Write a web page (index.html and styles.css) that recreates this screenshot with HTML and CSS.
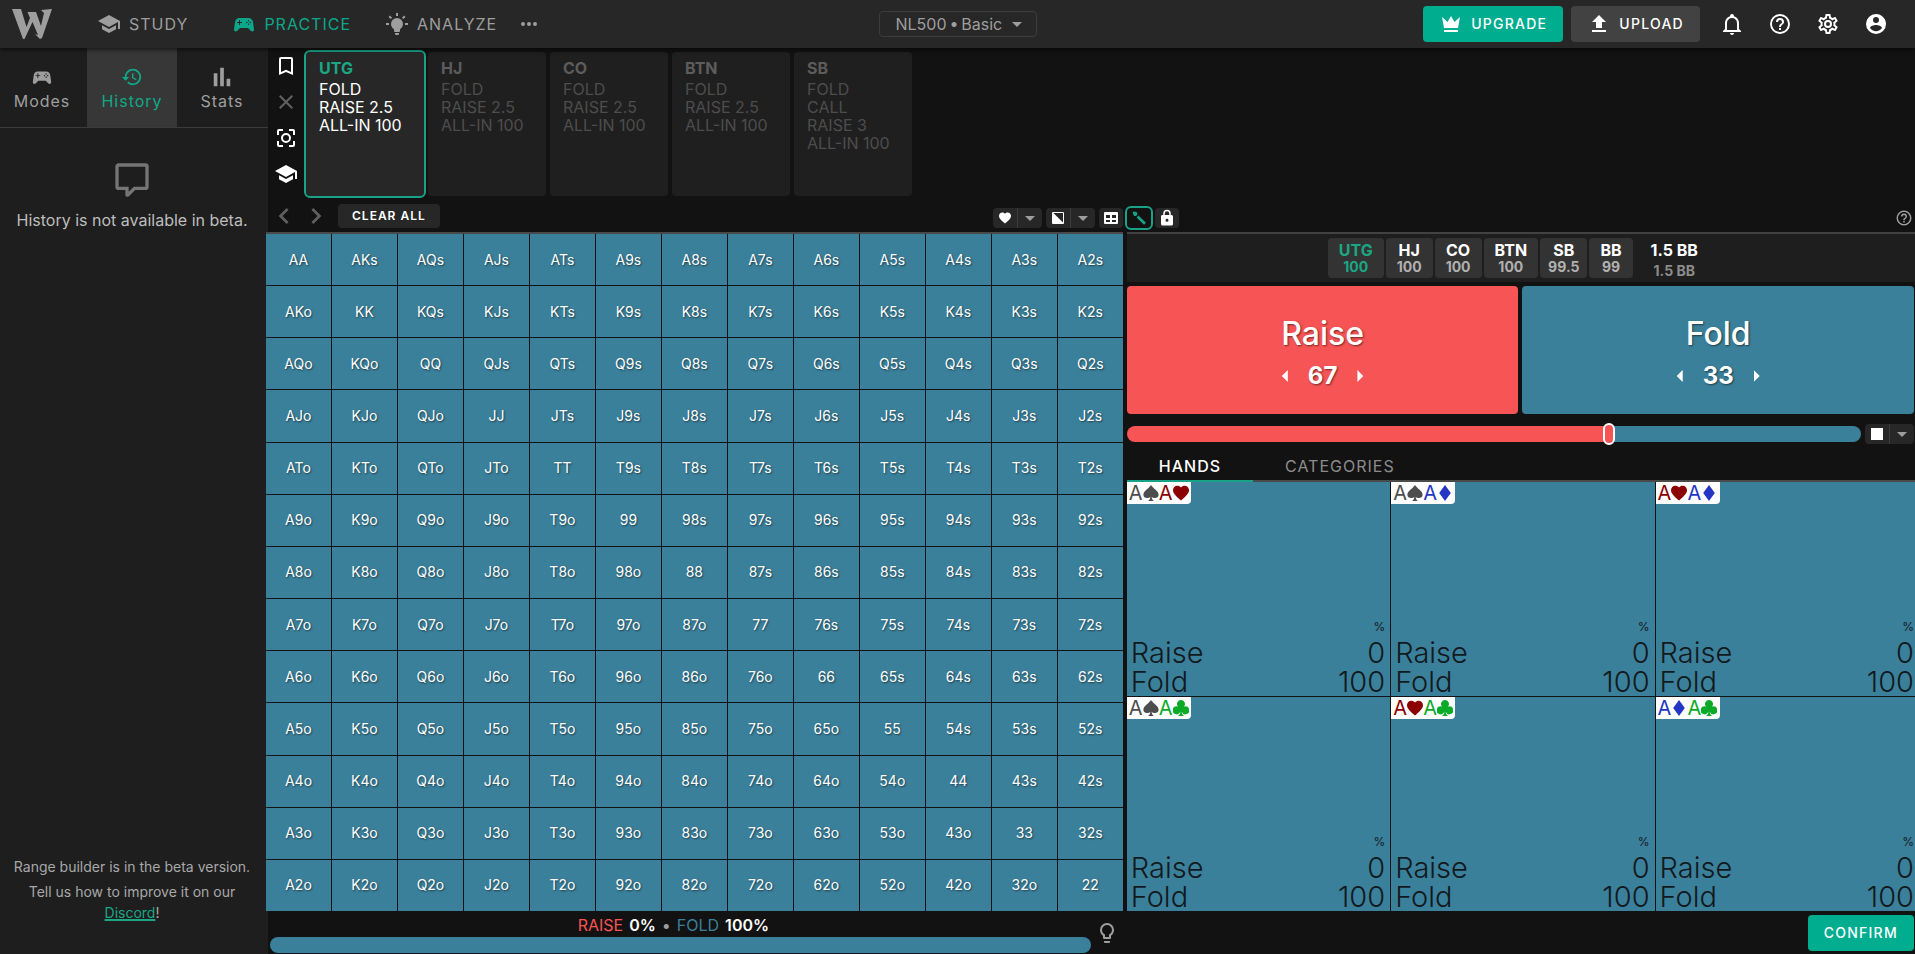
FILE: index.html
```html
<!DOCTYPE html>
<html lang="en">
<head>
<meta charset="utf-8">
<meta name="viewport" content="width=device-width, initial-scale=1">
<title>Range builder</title>
<link rel="stylesheet" href="styles.css">
</head>
<body>
<svg class="sprite" aria-hidden="true">
  <symbol id="i-school" viewBox="0 0 24 24"><path d="M12,3L1,9L12,15L21,10.09V17H23V9M5,13.18V17.18L12,21L19,17.18V13.18L12,17L5,13.18Z"/></symbol>
  <symbol id="i-pad" viewBox="0 0 24 24"><path fill-rule="evenodd" d="M7.97,16L5,19C4.67,19.3 4.23,19.5 3.75,19.5A1.75,1.75 0 0,1 2,17.75V17.5L3,10.12C3.21,7.81 5.14,6 7.5,6H16.5C18.86,6 20.79,7.81 21,10.12L22,17.5V17.75A1.75,1.75 0 0,1 20.25,19.5C19.77,19.5 19.33,19.3 19,19L16.03,16H7.97M7,8V10H5V11H7V13H8V11H10V10H8V8H7M16.5,8A.75,.75 0 0,0 16.5,9.5A.75,.75 0 0,0 16.5,8M14.75,9.75A.75,.75 0 0,0 14.75,11.25A.75,.75 0 0,0 14.75,9.75M18.25,9.75A.75,.75 0 0,0 18.25,11.25A.75,.75 0 0,0 18.25,9.75M16.5,11.5A.75,.75 0 0,0 16.5,13A.75,.75 0 0,0 16.5,11.5Z"/></symbol>
  <symbol id="i-bulb-on" viewBox="0 0 24 24"><path d="M12,6A6,6 0 0,1 18,12C18,14.22 16.79,16.16 15,17.2V19A1,1 0 0,1 14,20H10A1,1 0 0,1 9,19V17.2C7.21,16.16 6,14.22 6,12A6,6 0 0,1 12,6M14,21V22A1,1 0 0,1 13,23H11A1,1 0 0,1 10,22V21H14M20,11H23V13H20V11M1,11H4V13H1V11M13,1V4H11V1H13M4.92,3.5L7.05,5.64L5.63,7.05L3.5,4.93L4.92,3.5M16.95,5.63L19.07,3.5L20.5,4.93L18.37,7.05L16.95,5.63Z"/></symbol>
  <symbol id="i-dots" viewBox="0 0 24 24"><path d="M16,12A2,2 0 0,1 20,12A2,2 0 0,1 16,12M10,12A2,2 0 0,1 14,12A2,2 0 0,1 10,12M4,12A2,2 0 0,1 8,12A2,2 0 0,1 4,12Z"/></symbol>
  <symbol id="i-down" viewBox="0 0 24 24"><path d="M7,10L12,15L17,10H7Z"/></symbol>
  <symbol id="i-crown" viewBox="0 0 24 24"><path d="M5,16L3,5L8.5,10L12,4L15.5,10L21,5L19,16H5M5,18H19V20H5V18Z"/></symbol>
  <symbol id="i-upload" viewBox="0 0 24 24"><path d="M9,16V10H5L12,3L19,10H15V16H9M5,20V18H19V20H5Z"/></symbol>
  <symbol id="i-bell" viewBox="0 0 24 24"><path d="M10 21H14C14 22.1 13.1 23 12 23S10 22.1 10 21M21 19V20H3V19L5 17V11C5 7.9 7.03 5.17 10 4.29V4A2 2 0 0 1 14 4V4.29C16.97 5.17 19 7.9 19 11V17L21 19M17 11A5 5 0 0 0 7 11V18H17V11Z"/></symbol>
  <symbol id="i-help" viewBox="0 0 24 24"><path d="M11,18H13V16H11V18M12,2A10,10 0 0,0 2,12A10,10 0 0,0 12,22A10,10 0 0,0 22,12A10,10 0 0,0 12,2M12,20C7.59,20 4,16.41 4,12C4,7.59 7.59,4 12,4C16.41,4 20,7.59 20,12C20,16.41 16.41,20 12,20M12,6A4,4 0 0,0 8,10H10A2,2 0 0,1 12,8A2,2 0 0,1 14,10C14,12 11,11.75 11,15H13C13,12.75 16,12.5 16,10A4,4 0 0,0 12,6Z"/></symbol>
  <symbol id="i-cog" viewBox="0 0 24 24"><path d="M12,8A4,4 0 0,1 16,12A4,4 0 0,1 12,16A4,4 0 0,1 8,12A4,4 0 0,1 12,8M12,10A2,2 0 0,0 10,12A2,2 0 0,0 12,14A2,2 0 0,0 14,12A2,2 0 0,0 12,10M10,22C9.75,22 9.54,21.82 9.5,21.58L9.13,18.93C8.5,18.68 7.96,18.34 7.44,17.94L4.95,18.95C4.73,19.03 4.46,18.95 4.34,18.73L2.34,15.27C2.21,15.05 2.27,14.78 2.46,14.63L4.57,12.97L4.5,12L4.57,11L2.46,9.37C2.27,9.22 2.21,8.95 2.34,8.73L4.34,5.27C4.46,5.05 4.73,4.96 4.95,5.05L7.44,6.05C7.96,5.66 8.5,5.32 9.13,5.07L9.5,2.42C9.54,2.18 9.75,2 10,2H14C14.25,2 14.46,2.18 14.5,2.42L14.87,5.07C15.5,5.32 16.04,5.66 16.56,6.05L19.05,5.05C19.27,4.96 19.54,5.05 19.66,5.27L21.66,8.73C21.79,8.95 21.73,9.22 21.54,9.37L19.43,11L19.5,12L19.43,13L21.54,14.63C21.73,14.78 21.79,15.05 21.66,15.27L19.66,18.73C19.54,18.95 19.27,19.04 19.05,18.95L16.56,17.95C16.04,18.34 15.5,18.68 14.87,18.93L14.5,21.58C14.46,21.82 14.25,22 14,22H10M11.25,4L10.88,6.61C9.68,6.86 8.62,7.5 7.85,8.39L5.44,7.35L4.69,8.65L6.8,10.2C6.4,11.37 6.4,12.64 6.8,13.8L4.68,15.36L5.43,16.66L7.86,15.62C8.63,16.5 9.68,17.14 10.87,17.38L11.24,20H12.76L13.13,17.39C14.32,17.14 15.37,16.5 16.14,15.62L18.57,16.66L19.32,15.36L17.2,13.81C17.6,12.64 17.6,11.37 17.2,10.2L19.31,8.65L18.56,7.35L16.15,8.39C15.38,7.5 14.32,6.86 13.12,6.62L12.75,4H11.25Z"/></symbol>
  <symbol id="i-account" viewBox="0 0 24 24"><path d="M12,19.2C9.5,19.2 7.29,17.92 6,16C6.03,14 10,12.9 12,12.9C14,12.9 17.97,14 18,16C16.71,17.92 14.5,19.2 12,19.2M12,5A3,3 0 0,1 15,8A3,3 0 0,1 12,11A3,3 0 0,1 9,8A3,3 0 0,1 12,5M12,2A10,10 0 0,0 2,12A10,10 0 0,0 12,22A10,10 0 0,0 22,12C22,6.47 17.5,2 12,2Z"/></symbol>
  <symbol id="i-history" viewBox="0 0 24 24"><path d="M13.5,8H12V13L16.28,15.54L17,14.33L13.5,12.25V8M13,3A9,9 0 0,0 4,12H1L4.96,16.03L9,12H6A7,7 0 0,1 13,5A7,7 0 0,1 20,12A7,7 0 0,1 13,19C11.07,19 9.32,18.21 8.06,16.94L6.64,18.36C8.27,20 10.5,21 13,21A9,9 0 0,0 22,12A9,9 0 0,0 13,3"/></symbol>
  <symbol id="i-stats" viewBox="0 0 24 24"><path d="M3,8H7V22H3V8M10,2H14V22H10V2M17,14H21V22H17V14Z"/></symbol>
  <symbol id="i-comment" viewBox="0 0 24 24"><path d="M9,22A1,1 0 0,1 8,21V18H4A2,2 0 0,1 2,16V4C2,2.89 2.9,2 4,2H20A2,2 0 0,1 22,4V16A2,2 0 0,1 20,18H13.9L10.2,21.71C10,21.9 9.75,22 9.5,22H9M10,16V19.08L13.08,16H20V4H4V16H10Z"/></symbol>
  <symbol id="i-bookmark" viewBox="0 0 24 24"><path d="M17,18L12,15.82L7,18V5H17M17,3H7A2,2 0 0,0 5,5V21L12,18L19,21V5C19,3.89 18.1,3 17,3Z"/></symbol>
  <symbol id="i-close" viewBox="0 0 24 24"><path d="M19,6.41L17.59,5L12,10.59L6.41,5L5,6.41L10.59,12L5,17.59L6.41,19L12,13.41L17.59,19L19,17.59L13.41,12L19,6.41Z"/></symbol>
  <symbol id="i-focus" viewBox="0 0 24 24"><path fill-rule="evenodd" d="M5,15H3V19A2,2 0 0,0 5,21H9V19H5M5,5H9V3H5A2,2 0 0,0 3,5V9H5M19,3H15V5H19V9H21V5A2,2 0 0,0 19,3M19,19H15V21H19A2,2 0 0,0 21,19V15H19M12,7A5,5 0 0,0 12,17A5,5 0 0,0 12,7M12,9A3,3 0 0,1 12,15A3,3 0 0,1 12,9Z"/></symbol>
  <symbol id="i-left" viewBox="0 0 24 24"><path d="M15.41,16.58L10.83,12L15.41,7.41L14,6L8,12L14,18L15.41,16.58Z"/></symbol>
  <symbol id="i-right" viewBox="0 0 24 24"><path d="M8.59,16.58L13.17,12L8.59,7.41L10,6L16,12L10,18L8.59,16.58Z"/></symbol>
  <symbol id="i-heart" viewBox="2 2 20 20"><path d="M12,21.35L10.55,20.03C5.4,15.36 2,12.27 2,8.5C2,5.41 4.42,3 7.5,3C9.24,3 10.91,3.81 12,5.08C13.09,3.81 14.76,3 16.5,3C19.58,3 22,5.41 22,8.5C22,12.27 18.6,15.36 13.45,20.03L12,21.35Z"/></symbol>
  <symbol id="i-half" viewBox="0 0 12 12"><path fill-rule="evenodd" d="M1,0H11A1,1 0 0,1 12,1V11A1,1 0 0,1 11,12H1A1,1 0 0,1 0,11V1A1,1 0 0,1 1,0M1.4,1L11,10.6V1Z"/></symbol>
  <symbol id="i-table" viewBox="0 0 14 12"><path fill-rule="evenodd" d="M1,0H13A1,1 0 0,1 14,1V11A1,1 0 0,1 13,12H1A1,1 0 0,1 0,11V1A1,1 0 0,1 1,0M2,3V6H6V3M8,3V6H12V3M2,8V10H6V8M8,8V10H12V8Z"/></symbol>
  <symbol id="i-brush" viewBox="0 0 14 14"><path d="M0.5,0.5C2,1 4.5,0 5.3,2.2C5.6,4 4.2,5.4 2.6,5C0.8,4.5 1.4,2.2 0.5,0.5M4.6,6.4L6.4,4.6L14,11.8L12,13.8Z"/></symbol>
  <symbol id="i-lock" viewBox="0 0 24 24"><path d="M12,17A2,2 0 0,0 14,15C14,13.89 13.1,13 12,13A2,2 0 0,0 10,15A2,2 0 0,0 12,17M18,8A2,2 0 0,1 20,10V20A2,2 0 0,1 18,22H6A2,2 0 0,1 4,20V10C4,8.89 4.9,8 6,8H7V6A5,5 0 0,1 12,1A5,5 0 0,1 17,6V8H18M12,3A3,3 0 0,0 9,6V8H15V6A3,3 0 0,0 12,3Z"/></symbol>
  <symbol id="i-bulb" viewBox="0 0 24 24"><path d="M12,2A7,7 0 0,1 19,9C19,11.38 17.81,13.47 16,14.74V17A1,1 0 0,1 15,18H9A1,1 0 0,1 8,17V14.74C6.19,13.47 5,11.38 5,9A7,7 0 0,1 12,2M9,20H15V21A1,1 0 0,1 14,22H10A1,1 0 0,1 9,21V20M12,4A5,5 0 0,0 7,9C7,11.05 8.23,12.81 10,13.58V16H14V13.58C15.77,12.81 17,11.05 17,9A5,5 0 0,0 12,4Z"/></symbol>
  <symbol id="i-spade" viewBox="1 1 22 22"><path d="M12,1C9,6 1.5,9 1.5,14.5C1.5,17.5 4,19 6.5,19C8.5,19 10,18.3 11,17C11,19 10.5,21 8,23H16C13.5,21 13,19 13,17C14,18.3 15.5,19 17.5,19C20,19 22.5,17.5 22.5,14.5C22.5,9 15,6 12,1Z"/></symbol>
  <symbol id="i-club" viewBox="1 1 22 22"><path d="M12,1A5.5,5.5 0 0,1 16.2,10A5.5,5.5 0 1,1 13,17.2C13,19.5 13.8,21.5 16,23H8C10.2,21.5 11,19.5 11,17.2A5.5,5.5 0 1,1 7.8,10A5.5,5.5 0 0,1 12,1Z"/></symbol>
  <symbol id="i-diamond" viewBox="1 1 22 22"><path d="M20,12L12,23L4,12L12,1Z"/></symbol>
  <symbol id="i-logo" viewBox="0 0 40 30"><path d="M0,0H9L14.5,18L18,9L15.5,3H24L29,17L32,4L29,1L40,0L30,29L28,30L23,25L26,26L20.5,13L12.5,30H11Z"/></symbol>
</svg>

<header class="topbar">
  <a class="logo" href="#" aria-label="Home"><svg><use href="#i-logo"/></svg></a>
  <nav class="mainnav">
    <a href="#"><svg class="icon"><use href="#i-school"/></svg>STUDY</a>
    <a class="on" href="#"><svg class="icon"><use href="#i-pad"/></svg>PRACTICE</a>
    <a href="#"><svg class="icon"><use href="#i-bulb-on"/></svg>ANALYZE</a>
    <button class="plain" aria-label="More"><svg class="icon"><use href="#i-dots"/></svg></button>
  </nav>
  <div class="game">
    <select aria-label="Game"><option>NL500&#8201;•&#8201;Basic</option></select>
    <svg class="icon"><use href="#i-down"/></svg>
  </div>
  <div class="account">
    <button class="btn primary"><svg class="icon"><use href="#i-crown"/></svg>UPGRADE</button>
    <button class="btn"><svg class="icon"><use href="#i-upload"/></svg>UPLOAD</button>
    <button class="plain" aria-label="Notifications"><svg class="icon"><use href="#i-bell"/></svg></button>
    <button class="plain" aria-label="Help"><svg class="icon"><use href="#i-help"/></svg></button>
    <button class="plain" aria-label="Settings"><svg class="icon"><use href="#i-cog"/></svg></button>
    <button class="plain" aria-label="Account"><svg class="icon"><use href="#i-account"/></svg></button>
  </div>
</header>

<div class="page">
  <aside class="sidebar">
    <nav class="sidetabs">
      <button><svg><use href="#i-pad"/></svg>Modes</button>
      <button class="on"><svg><use href="#i-history"/></svg>History</button>
      <button><svg><use href="#i-stats"/></svg>Stats</button>
    </nav>
    <div class="empty"><svg><use href="#i-comment"/></svg><p>History is not available in beta.</p></div>
    <footer class="beta"><p>Range builder is in the beta version.</p><p>Tell us how to improve it on our <a href="#">Discord</a>!</p></footer>
  </aside>

  <main class="content">
    <section class="actions">
      <div class="tools">
        <button class="plain" aria-label="Bookmark"><svg class="icon"><use href="#i-bookmark"/></svg></button>
        <button class="plain dim" aria-label="Clear"><svg class="icon"><use href="#i-close"/></svg></button>
        <button class="plain" aria-label="Focus"><svg class="icon"><use href="#i-focus"/></svg></button>
        <button class="plain" aria-label="Study"><svg class="icon"><use href="#i-school"/></svg></button>
      </div>
      <div class="seat on"><h2>UTG</h2><button>FOLD</button><button>RAISE 2.5</button><button>ALL-IN 100</button></div>
      <div class="seat"><h2>HJ</h2><button>FOLD</button><button>RAISE 2.5</button><button>ALL-IN 100</button></div>
      <div class="seat"><h2>CO</h2><button>FOLD</button><button>RAISE 2.5</button><button>ALL-IN 100</button></div>
      <div class="seat"><h2>BTN</h2><button>FOLD</button><button>RAISE 2.5</button><button>ALL-IN 100</button></div>
      <div class="seat"><h2>SB</h2><button>FOLD</button><button>CALL</button><button>RAISE 3</button><button>ALL-IN 100</button></div>
    </section>

    <section class="split toolbar">
      <div class="bar left">
        <button class="plain dim" aria-label="Back"><svg class="arrow"><use href="#i-left"/></svg></button>
        <button class="plain dim" aria-label="Forward"><svg class="arrow"><use href="#i-right"/></svg></button>
        <button class="clear">CLEAR ALL</button>
        <div class="chips">
          <div class="pair"><button aria-label="Suits"><svg class="i12"><use href="#i-heart"/></svg></button><button aria-label="Suit options"><svg class="icon"><use href="#i-down"/></svg></button></div>
          <div class="pair"><button aria-label="Fill"><svg class="i12"><use href="#i-half"/></svg></button><button aria-label="Fill options"><svg class="icon"><use href="#i-down"/></svg></button></div>
          <button class="chip" aria-label="Table"><svg class="i14"><use href="#i-table"/></svg></button>
        </div>
      </div>
      <div class="bar right">
        <button class="chip on" aria-label="Brush"><svg class="i14"><use href="#i-brush"/></svg></button>
        <button class="chip" aria-label="Lock"><svg class="i18"><use href="#i-lock"/></svg></button>
        <button class="plain hint" aria-label="Help"><svg class="i18"><use href="#i-help"/></svg></button>
      </div>
    </section>

    <section class="split board">
      <div class="matrix" id="matrix"></div>
      <div class="panel">
        <div class="seats">
          <div class="stack on"><b>UTG</b><span>100</span></div>
          <div class="stack"><b>HJ</b><span>100</span></div>
          <div class="stack"><b>CO</b><span>100</span></div>
          <div class="stack"><b>BTN</b><span>100</span></div>
          <div class="stack"><b>SB</b><span>99.5</span></div>
          <div class="stack"><b>BB</b><span>99</span></div>
          <div class="pot"><b>1.5 BB</b><span>1.5 BB</span></div>
        </div>
        <div class="choices">
          <div class="choice raise"><h3>Raise</h3><div class="stepper"><button class="less" aria-label="Less raise"></button><b>67</b><button class="more" aria-label="More raise"></button></div></div>
          <div class="choice"><h3>Fold</h3><div class="stepper"><button class="less" aria-label="Less fold"></button><b>33</b><button class="more" aria-label="More fold"></button></div></div>
        </div>
        <div class="mix">
          <input type="range" min="0" max="100" value="66" aria-label="Raise share">
          <div class="pair"><button aria-label="Weight"><span class="square"></span></button><button aria-label="Weight options"><svg class="icon"><use href="#i-down"/></svg></button></div>
        </div>
        <div class="tabs"><button class="on">HANDS</button><button>CATEGORIES</button></div>
        <div class="hands" id="hands"></div>
      </div>
    </section>

    <footer class="split status">
      <div class="summary">
        <div class="totals">
          <p><span class="red">RAISE</span><b>0%</b><i>•</i><span class="blue">FOLD</span><b>100%</b></p>
          <div class="meter"></div>
        </div>
        <button class="plain" aria-label="Tips"><svg class="icon"><use href="#i-bulb"/></svg></button>
      </div>
      <div class="confirm"><button class="btn primary">CONFIRM</button></div>
    </footer>
  </main>
</div>
<script src="app.js"></script>
</body>
</html>
```
FILE: styles.css
```css
* { box-sizing: border-box; margin: 0; padding: 0; }

body {
  display: flex;
  flex-direction: column;
  height: 100vh;
  background: #121212;
  color: #fff;
  font: 16px/18px Inter, "Liberation Sans", sans-serif;
}

button, select { font: inherit; color: inherit; background: none; border: 0; cursor: pointer; }
svg { display: block; fill: currentColor; flex: none; }
.sprite { position: absolute; width: 0; height: 0; }
.icon { width: 24px; height: 24px; }
.arrow { width: 32px; height: 32px; }
.i12 { width: 12px; height: 12px; }
.i14 { width: 14px; height: 14px; }
.i18 { width: 18px; height: 18px; }
.plain { display: flex; align-items: center; justify-content: center; }
.dim { color: #616161; }

/* top bar */
.topbar {
  display: grid;
  grid-template-columns: 1fr auto 1fr;
  align-items: center;
  height: 48px;
  background: #272727;
  box-shadow: 0 2px 4px #0008;
  color: #9e9e9e;
  position: relative;
}
.logo { grid-area: 1 / 1; width: 40px; margin-left: 12px; color: inherit; }
.logo svg { width: 40px; height: 30px; }
.mainnav { grid-area: 1 / 1; display: flex; align-items: center; margin-left: 97px; }
.mainnav a {
  display: flex;
  align-items: center;
  gap: 8px;
  margin-right: 44px;
  color: inherit;
  text-decoration: none;
  letter-spacing: 1px;
}
.mainnav a:nth-child(2) { margin-right: 34px; }
.mainnav a:nth-child(3) { margin-right: 20px; }
.mainnav .on { color: #0ca78a; }
.game { grid-area: 1 / 2; display: grid; align-items: center; width: 158px; }
.game select {
  grid-area: 1 / 1;
  height: 26px;
  padding: 0 16px;
  border: 1px solid #3c3c3c;
  border-radius: 4px;
  appearance: none;
}
.game svg { grid-area: 1 / 1; justify-self: end; margin-right: 8px; pointer-events: none; }
.account { grid-area: 1 / 3; display: flex; justify-content: flex-end; align-items: center; padding-right: 27px; color: #fff; }
.account .plain { margin-left: 24px; }
.account .btn + .btn { margin: 0 -4px 0 8px; }

.btn {
  display: flex;
  align-items: center;
  gap: 8px;
  height: 36px;
  padding: 0 16px;
  border-radius: 4px;
  background: #424242;
  font-size: 14px;
  font-weight: 500;
  letter-spacing: 0.09em;
}
.primary { background: #00ad8f; }

/* side bar */
.page { display: flex; flex: 1; min-height: 0; }
.sidebar { display: flex; flex-direction: column; width: 268px; background: #1e1e1e; color: #bdbdbd; text-align: center; overflow: hidden; }
.sidetabs { display: grid; grid-template-columns: repeat(3, 90px); height: 80px; margin-left: -3px; border-bottom: 1px solid #3c3c3c; }
.sidetabs button {
  display: flex;
  flex-direction: column;
  align-items: center;
  justify-content: center;
  gap: 4px;
  color: #9e9e9e;
  letter-spacing: 1px;
}
.sidetabs svg { width: 22px; height: 22px; }
.sidetabs .on { background: #373737; color: #10a88a; }
.empty { display: flex; flex-direction: column; align-items: center; gap: 11px; padding: 32px 4px 0 0; }
.empty svg { width: 40px; height: 40px; color: #757575; }
.beta { margin-top: auto; padding: 0 12px 31px 8px; color: #a8a8a8; font-size: 14px; line-height: 21px; }
.beta p + p { margin-top: 4px; }
.beta a { color: #1ba784; text-decoration-thickness: 2px; }

/* action cards */
.content { display: flex; flex-direction: column; flex: 1; min-width: 0; }
.actions { display: flex; gap: 4px; height: 152px; padding: 4px 0; }
.tools { display: flex; flex-direction: column; gap: 12px; width: 34px; padding: 2px 0 0 2px; }
.seat {
  display: flex;
  flex-direction: column;
  align-items: flex-start;
  width: 118px;
  padding: 7px 13px;
  border-radius: 4px;
  background: #1f1f1f;
  color: #4d4d4d;
}
.seat h2 { margin-bottom: 3px; color: #5c5c5c; font-size: 16px; font-weight: 700; line-height: 18px; }
.seat.on { background: #272727; color: #fff; outline: 2px solid #18a287; }
.seat.on h2 { color: #1ba784; }

/* toolbar */
.split { display: grid; grid-template-columns: 25fr 23fr; gap: 4px; margin-left: -2px; }
.toolbar { height: 32px; }
.bar { display: flex; align-items: center; }
.bar.left { padding-left: 2px; }
.clear {
  height: 24px;
  margin-left: 6px;
  padding: 0 14px;
  border-radius: 4px;
  background: #272727;
  font-size: 12px;
  font-weight: 600;
  letter-spacing: 1px;
}
.chips { display: flex; gap: 4px; margin: 4px 0 0 auto; }
.pair { display: flex; height: 20px; border-radius: 4px; background: #272727; color: #fff; }
.pair button, .chip { display: flex; align-items: center; justify-content: center; width: 24px; height: 20px; }
.pair button + button { width: 25px; border-left: 1px solid #3c3c3c; color: #9e9e9e; }
.chip { border-radius: 4px; background: #272727; }
.chip.on { outline: 2px solid #18a287; background: #121212; color: #18a287; }
.bar.right { gap: 4px; padding: 4px 2px 0 0; }
.hint { margin-left: auto; color: #9e9e9e; }

/* board */
.board { flex: 1; min-height: 0; }
.matrix {
  display: grid;
  grid-template: repeat(13, 1fr) / repeat(13, 1fr);
  gap: 1px;
  border-top: 2px solid #4a4a4a;
}
.matrix button { min-width: 0; background: #3b809b; font-size: 14px; text-shadow: 1px 1px 2px #0008; }

.panel { display: flex; flex-direction: column; min-width: 0; min-height: 0; border-top: 2px solid #424242; overflow: hidden; }
.seats { display: flex; justify-content: center; gap: 2px; padding: 4px 18px 4px 2px; background: #1e1e1e; }
.stack, .pot { display: flex; flex-direction: column; align-items: center; height: 40px; border-radius: 4px; }
.stack { padding: 3px 11px; background: #333; }
.stack:nth-child(5) { padding: 3px 8px; }
.seats span { color: #b0b0b0; font-size: 14px; font-weight: 700; line-height: 16px; }
.seats .on, .seats .on span { color: #1ba784; }
.pot { justify-content: space-between; margin-left: 16px; padding-top: 3px; }
.pot span { color: #8c8c8c; line-height: 14px; }

.choices { display: grid; grid-template-columns: 1fr 1fr; gap: 4px; height: 128px; margin: 4px 1px 0 0; }
.choice {
  display: flex;
  flex-direction: column;
  align-items: center;
  justify-content: center;
  gap: 9px;
  padding-top: 7px;
  border-radius: 4px;
  background: #3b809b;
  text-shadow: 1px 1px 2px #0008;
}
.choice.raise { background: #f75455; }
.choice h3 { font-size: 32px; font-weight: 500; line-height: 36px; }
.stepper { display: flex; align-items: center; gap: 20px; font-size: 24px; line-height: 30px; }
.stepper button { width: 6px; height: 12px; background: #fff; }
.less { clip-path: polygon(0 50%, 100% 0, 100% 100%); }
.more { clip-path: polygon(0 0, 100% 50%, 0 100%); }

.mix { display: flex; align-items: center; gap: 4px; height: 24px; margin: 8px 1px 0 0; }
.mix input {
  flex: 1;
  min-width: 0;
  height: 16px;
  border-radius: 8px;
  background: linear-gradient(to right, #f75455 66%, #3b809b 66%);
  appearance: none;
}
.mix input::-webkit-slider-thumb {
  width: 12px;
  height: 22px;
  border: 2px solid #fff;
  border-radius: 6px;
  background: #f75455;
  appearance: none;
}
.square { width: 12px; height: 12px; background: #fff; }

.tabs { display: flex; height: 36px; border-bottom: 2px solid #4a4a4a; }
.tabs button { height: 36px; padding: 6px 32px 0; border-bottom: 2px solid transparent; color: #8c8c8c; letter-spacing: 1px; }
.tabs .on { border-color: #18a287; color: #fff; font-weight: 500; }

/* the last column runs slightly past the panel edge */
.hands { display: grid; flex: 1; grid-template: repeat(2, 1fr) / repeat(3, 1fr); gap: 1px; margin-right: -4px; }
.hand { display: flex; flex-direction: column; align-items: stretch; background: #3b809b; color: #12191d; }
.combo {
  display: flex;
  align-items: center;
  align-self: flex-start;
  height: 22px;
  padding: 0 2px;
  border-bottom-right-radius: 4px;
  background: #fff;
  font-size: 20px;
  line-height: 22px;
}
.combo span { display: flex; align-items: center; width: 30px; }
.combo svg { width: 16px; height: 16px; }
.spade { color: #4d4d4d; }
.heart { color: #8b0000; }
.diamond { color: #2536c4; }
.club { color: #0cab27; }
.hand dl { display: grid; grid-template-columns: 1fr auto; margin-top: auto; padding: 0 5px 0 4px; font-size: 29px; font-weight: 300; line-height: 29px; }
.hand dl::before { content: "%"; grid-column: 1 / 3; justify-self: end; font-size: 12px; font-weight: 400; line-height: 22px; }
.hand dd { text-align: right; }

/* status row */
.status { height: 43px; }
.summary { display: flex; gap: 4px; padding: 0 4px; }
.totals { display: flex; flex: 1; flex-direction: column; padding: 5px 0 1px; }
.totals p { display: flex; justify-content: center; gap: 6px; padding-right: 14px; }
.totals b { font-weight: 600; }
.totals i { color: #9e9e9e; font-style: normal; }
.red { color: #f75455; }
.blue { color: #3b809b; }
.meter { height: 16px; margin-top: auto; border-radius: 8px; background: #3b809b; }
.summary .plain { width: 24px; color: #9e9e9e; }
.confirm { display: flex; justify-content: flex-end; padding: 4px 1px 0 0; }
```
FILE: app.js
```js
const ranks = "AKQJT98765432";
const matrix = document.getElementById("matrix");
for (let row = 0; row < 13; row++) {
  for (let col = 0; col < 13; col++) {
    const cell = document.createElement("button");
    const high = ranks[Math.min(row, col)];
    const low = ranks[Math.max(row, col)];
    cell.textContent = high + low + (row === col ? "" : row < col ? "s" : "o");
    matrix.append(cell);
  }
}

const combos = [
  ["spade", "heart"], ["spade", "diamond"], ["heart", "diamond"],
  ["spade", "club"], ["heart", "club"], ["diamond", "club"],
];
const card = (suit) => `<span class="${suit}">A<svg><use href="#i-${suit}"/></svg></span>`;
document.getElementById("hands").innerHTML = combos.map((suits) => `
  <div class="hand">
    <div class="combo">${suits.map(card).join("")}</div>
    <dl><dt>Raise</dt><dd>0</dd><dt>Fold</dt><dd>100</dd></dl>
  </div>`).join("");
```
